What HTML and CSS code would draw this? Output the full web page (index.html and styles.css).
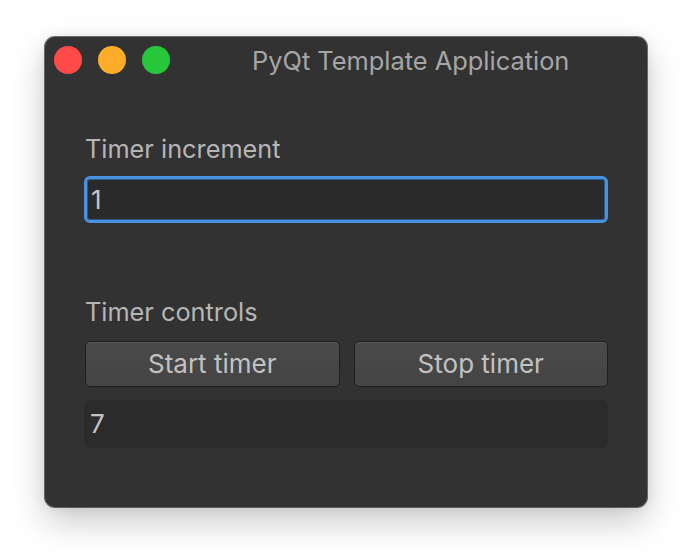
FILE: index.html
```html
<!DOCTYPE html>
<html>
<head>
<meta charset="utf-8">
<title>PyQt Template Application</title>
<link rel="stylesheet" href="styles.css">
</head>
<body>
<div class="window">
  <div class="titlebar">
    <div class="lights">
      <span class="light red"></span>
      <span class="light yellow"></span>
      <span class="light green"></span>
    </div>
    <div class="title">PyQt Template Application</div>
  </div>
  <div class="content">
    <div class="label">Timer increment</div>
    <div class="input focused">1</div>
    <div class="label second">Timer controls</div>
    <div class="buttons">
      <div class="button">Start timer</div>
      <div class="button">Stop timer</div>
    </div>
    <div class="input output">7</div>
  </div>
</div>
</body>
</html>
```

FILE: styles.css
```css
html, body {
  margin: 0;
  padding: 0;
  background: #ffffff;
}

body {
  font-family: Inter, "Noto Sans", "Liberation Sans", sans-serif;
  width: 692px;
  height: 560px;
  overflow: hidden;
}

.window {
  margin-left: 45px;
  margin-top: 37px;
  width: 602px;
  height: 470px;
  box-sizing: border-box;
  background: #323232;
  border-radius: 10px;
  box-shadow: 0 0 0 1px rgba(0, 0, 0, 0.55), 0 14px 34px rgba(0, 0, 0, 0.22), 0 0 12px rgba(0, 0, 0, 0.08);
}

.titlebar {
  height: 46px;
  display: flex;
  align-items: center;
  padding-left: 9px;
}

.lights {
  display: flex;
  gap: 16px;
}

.light {
  width: 28px;
  height: 28px;
  border-radius: 50%;
  display: block;
}

.red { background: #fe4a49; }
.yellow { background: #fdac29; }
.green { background: #26c73a; }

.title {
  margin-left: 82px;
  font-size: 25.4px;
  color: #a6a6a6;
  margin-top: 1px;
}

.content {
  padding: 50px 39px 0 39px;
  display: flex;
  flex-direction: column;
}

.label {
  font-size: 25.3px;
  line-height: 32px;
  height: 32px;
  color: #b6b6b6;
  padding-left: 1px;
}

.label.second {
  margin-top: 73px;
}

.input {
  margin-top: 11px;
  height: 47px;
  box-sizing: border-box;
  background: #2a2a2a;
  border-radius: 6px;
  font-size: 26px;
  line-height: 41px;
  color: #c4c4c4;
  padding-left: 4px;
}

.input.focused {
  border: 3px solid #4a92e0;
  box-shadow: inset 0 0 0 1px #2d5a8a;
}

.input.output {
  margin-top: 13px;
  height: 48px;
  border: 1px solid #2c2c2c;
  line-height: 46px;
  padding-left: 5px;
  background: #2b2b2b;
}

.buttons {
  margin-top: 13px;
  display: flex;
  gap: 14px;
}

.button {
  flex: 1;
  height: 46px;
  box-sizing: border-box;
  border: 1px solid #1f1f1f;
  border-radius: 5px;
  background: linear-gradient(#4a4a4a, #444444);
  box-shadow: inset 0 1px 0 rgba(255, 255, 255, 0.08);
  text-align: center;
  font-size: 26px;
  line-height: 44px;
  color: #c2c2c2;
}

.button:first-child {
  margin-left: 1px;
}
```
